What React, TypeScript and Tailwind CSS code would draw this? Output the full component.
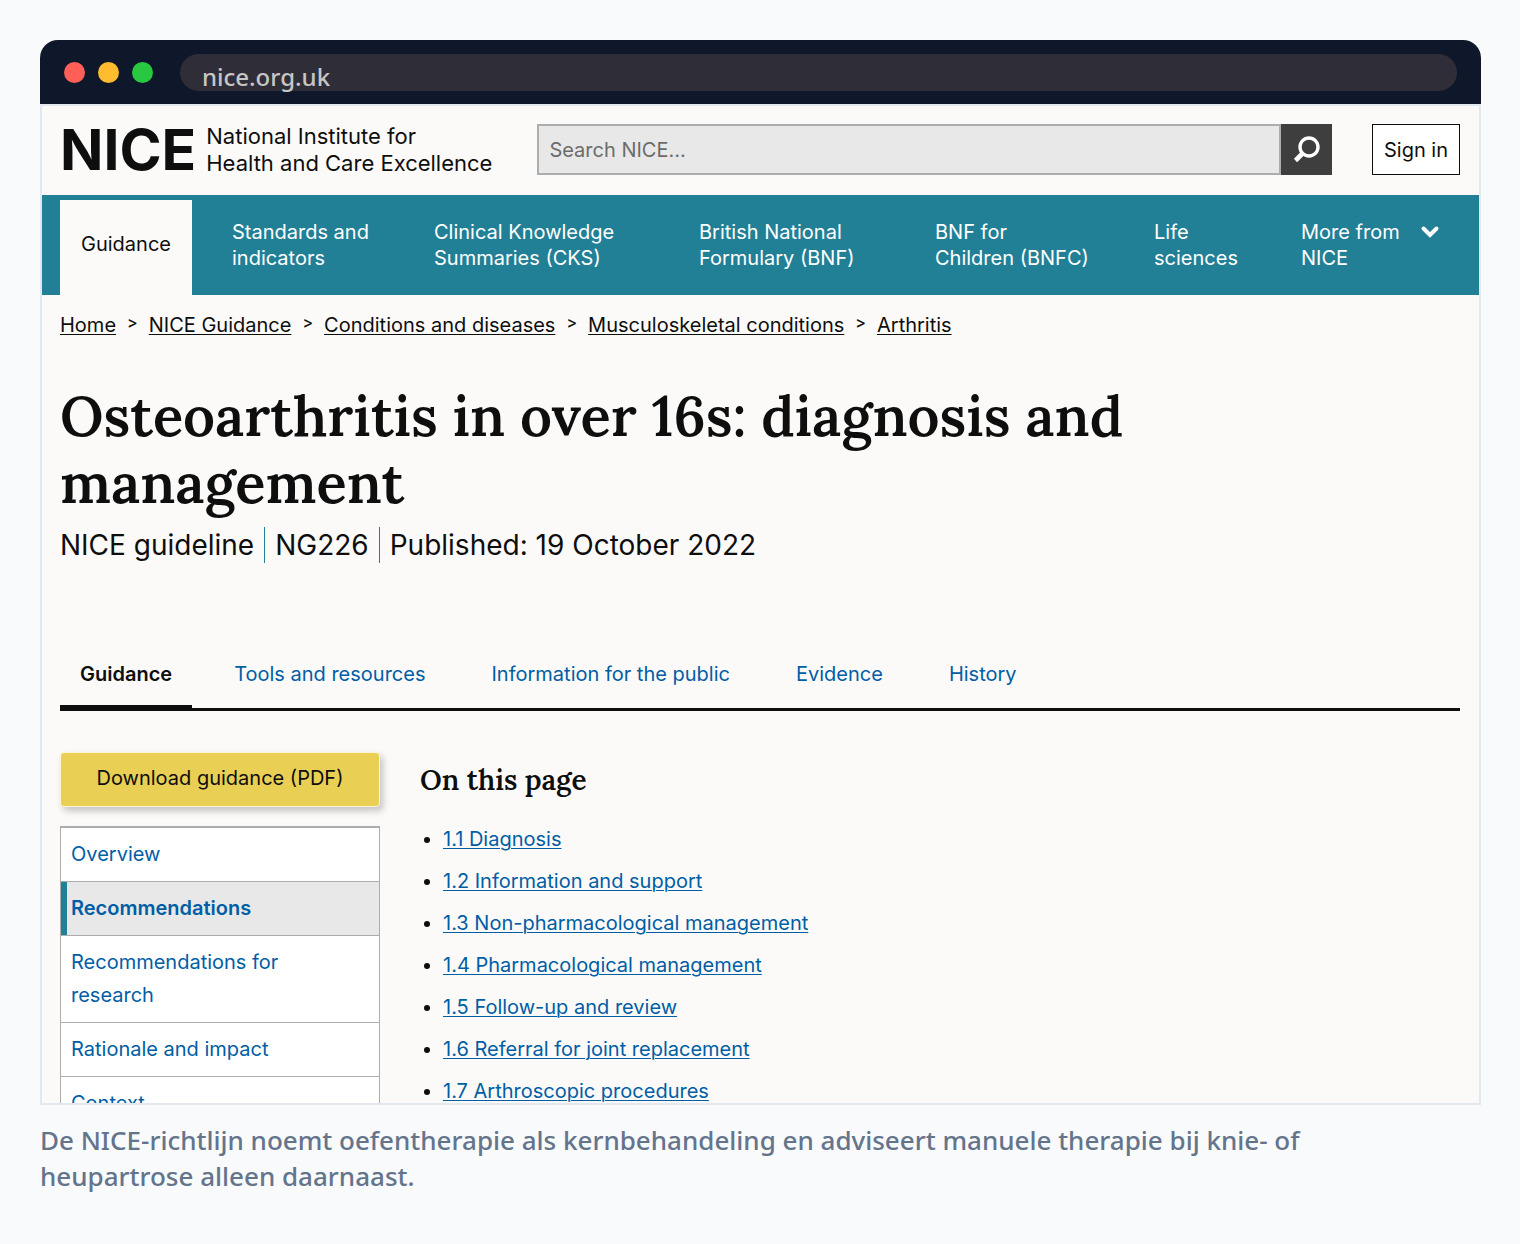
const navItems = [
  ["Standards and", "indicators"],
  ["Clinical Knowledge", "Summaries (CKS)"],
  ["British National", "Formulary (BNF)"],
  ["BNF for", "Children (BNFC)"],
  ["Life", "sciences"],
];

const breadcrumbs = ["Home", "NICE Guidance", "Conditions and diseases", "Musculoskeletal conditions", "Arthritis"];

const tabs = ["Tools and resources", "Information for the public", "Evidence", "History"];

const chapters = ["Overview", "Recommendations", "Recommendations for research", "Rationale and impact", "Context"];

const sections = [
  "1.1 Diagnosis",
  "1.2 Information and support",
  "1.3 Non-pharmacological management",
  "1.4 Pharmacological management",
  "1.5 Follow-up and review",
  "1.6 Referral for joint replacement",
  "1.7 Arthroscopic procedures",
];

function BrowserBar() {
  return (
    <div className="flex h-16 items-center rounded-t-[18px] bg-[#0f172a] px-6">
      <div className="flex gap-[13px]">
        <span className="size-[21px] rounded-full bg-[#ff5f57]"></span>
        <span className="size-[21px] rounded-full bg-[#febc2e]"></span>
        <span className="size-[21px] rounded-full bg-[#28c840]"></span>
      </div>
      <div className="ml-[27px] h-[37px] flex-1 rounded-full bg-[#2f2e38] px-[22px] pt-[5px] font-['Noto_Sans'] text-2xl font-medium leading-9 text-[#c8c6c5]">
        nice.org.uk
      </div>
    </div>
  );
}

function Header() {
  return (
    <header className="flex h-[89px] items-center pb-0.5 pl-[18px] pr-[19px]">
      <a href="#" className="flex items-center">
        <span className="text-[57px] font-bold leading-[54px]">NICE</span>
        <span className="ml-2.5 whitespace-nowrap text-[22px] leading-[27px]">
          National Institute for
          <br />
          Health and Care Excellence
        </span>
      </a>
      <form className="ml-[45px] flex h-[51px] flex-1">
        <input
          type="text"
          aria-label="Search NICE"
          placeholder="Search NICE…"
          className="min-w-0 flex-1 border-2 border-[#adadad] bg-[#e8e8e8] px-2.5 text-xl outline-none placeholder:text-[#6b6b6b]"
        />
        <button type="button" aria-label="Search" className="flex w-[51px] items-center justify-center bg-[#3e3e3e]">
          <svg viewBox="0 0 28 28" className="size-7" fill="none" stroke="white">
            <circle cx="16" cy="11" r="9" strokeWidth="3.4" />
            <path d="M9.5 17.5 L2.5 24.5" strokeWidth="4.6" />
          </svg>
        </button>
      </form>
      <button type="button" className="ml-10 h-[51px] w-[88px] border border-[#0e0e0e] bg-white text-xl">
        Sign in
      </button>
    </header>
  );
}

function Navigation() {
  return (
    <nav className="grid h-[100px] grid-cols-[172fr_202fr_265fr_236fr_219fr_147fr_159fr] bg-[#228096] pl-[18px] pr-[19px] pt-[5px] text-xl leading-[26px] text-white">
      <a href="#" className="flex w-[132px] items-center justify-center bg-[#fbfaf8] pb-2 text-[#0e0e0e]">
        Guidance
      </a>
      {navItems.map(([first, second]) => (
        <a key={first} href="#" className="pt-[19px]">
          {first}
          <br />
          {second}
        </a>
      ))}
      <button type="button" className="flex items-start justify-between pr-5 pt-[19px] text-left">
        <span>
          More from
          <br />
          NICE
        </span>
        <svg viewBox="0 0 20 14" className="mt-1.5 h-3.5 w-5" fill="none" stroke="white" strokeWidth="4" strokeLinecap="round">
          <path d="M3.5 3.5 L10 10 L16.5 3.5" />
        </svg>
      </button>
    </nav>
  );
}

function Breadcrumbs() {
  return (
    <nav aria-label="Breadcrumbs" className="flex pt-[17px] text-xl leading-[26px]">
      {breadcrumbs.map((crumb, i) => (
        <span key={crumb} className="flex">
          {i > 0 && <span className="mx-[11px] -mt-0.5 text-base font-medium">&gt;</span>}
          <a href="#" className="underline decoration-1 underline-offset-2">
            {crumb}
          </a>
        </span>
      ))}
    </nav>
  );
}

function Sidebar() {
  return (
    <aside className="w-80 shrink-0">
      <button
        type="button"
        className="h-[55px] w-full rounded border border-[#fdf6d5] bg-[#e9d055] pb-1 text-xl shadow-[3px_4px_7px_rgba(0,0,0,0.22)]"
      >
        Download guidance (PDF)
      </button>
      <ul className="mt-[19px] border border-t-2 border-[#adadad] bg-white text-xl leading-[33px] text-[#005ea5]">
        {chapters.map((chapter) => (
          <li key={chapter} className="border-b border-[#adadad]">
            {chapter === "Recommendations" ? (
              <a href="#" className="block border-l-[6px] border-[#228096] bg-[#e8e8e8] py-2.5 pl-1 pr-8 font-semibold">
                {chapter}
              </a>
            ) : (
              <a href="#" className="block py-2.5 pl-2.5 pr-8">
                {chapter}
              </a>
            )}
          </li>
        ))}
      </ul>
    </aside>
  );
}

export default function App() {
  return (
    <div className="min-h-screen bg-[#f8fafc] py-10 pl-10 pr-[39px]">
      <BrowserBar />
      <div className="aspect-[1441/1001] overflow-hidden border-2 border-[#e2e8f0] bg-[#fbfaf8] font-['Inter'] text-[#0e0e0e]">
        <Header />
        <Navigation />
        <main className="pl-[18px] pr-[19px]">
          <Breadcrumbs />
          <h1 className="mt-11 max-w-[1120px] font-['Lora','Liberation_Serif',serif] text-[56px] font-semibold leading-[67px]">
            Osteoarthritis in over 16s: diagnosis and management
          </h1>
          <ul className="mt-[11px] flex text-[28px] leading-9">
            <li className="border-r border-[#228096] pr-2.5">NICE guideline</li>
            <li className="border-r border-[#228096] px-2.5">NG226</li>
            <li className="pl-2.5">Published: 19 October 2022</li>
          </ul>
          <div className="mt-[77px] flex border-b-[3px] border-[#0e0e0e] text-xl leading-[26px] text-[#005ea5]">
            <a href="#" className="-mb-[3px] border-b-[6px] border-[#0e0e0e] px-5 pb-[18px] pt-[21px] font-semibold text-[#0e0e0e]">
              Guidance
            </a>
            <div className="ml-[42px] flex gap-[66px] pt-[21px]">
              {tabs.map((tab) => (
                <a key={tab} href="#">
                  {tab}
                </a>
              ))}
            </div>
          </div>
          <div className="mt-[41px] flex gap-10">
            <Sidebar />
            <section>
              <h2 className="pt-2.5 font-['Lora','Liberation_Serif',serif] text-[28px] font-semibold leading-9">On this page</h2>
              <ul className="mt-[25px] list-disc space-y-2.5 pl-[23px] text-xl leading-8">
                {sections.map((section) => (
                  <li key={section}>
                    <a href="#" className="text-[#005ea5] underline decoration-1 underline-offset-2">
                      {section}
                    </a>
                  </li>
                ))}
              </ul>
            </section>
          </div>
        </main>
      </div>
      <p className="max-w-[1360px] pt-[17px] font-['Noto_Sans'] text-[26px] font-medium leading-9 text-[#64748b]">
        De NICE-richtlijn noemt oefentherapie als kernbehandeling en adviseert manuele therapie bij knie- of heupartrose
        alleen daarnaast.
      </p>
    </div>
  );
}
